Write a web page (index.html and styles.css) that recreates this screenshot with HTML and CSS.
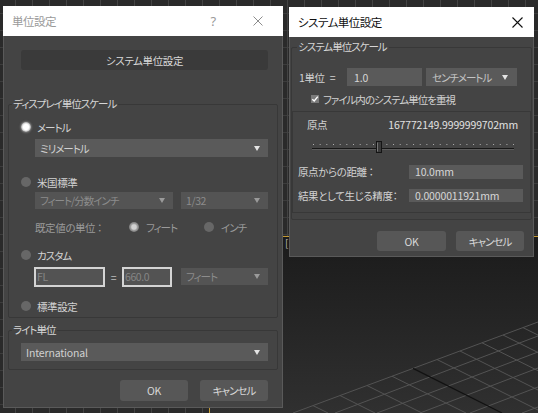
FILE: index.html
```html
<!DOCTYPE html>
<html lang="ja">
<head>
<meta charset="utf-8">
<title>単位設定</title>
<link rel="stylesheet" href="styles.css">
</head>
<body>
<div class="viewport">
  <span class="vp-label">[</span>
  <svg class="vp-grid" width="329" height="177" viewBox="209 236 329 177">
    <g stroke="#535353" stroke-width="1" fill="none">
      <line x1="293" y1="413" x2="538" y2="322"/>
      <line x1="335" y1="413" x2="538" y2="336"/>
      <line x1="377" y1="413" x2="538" y2="352"/>
      <line x1="420" y1="413" x2="538" y2="368"/>
      <line x1="470" y1="413" x2="538" y2="387"/>
      <line x1="522" y1="413" x2="538" y2="407"/>
      <line x1="313" y1="405.6" x2="328" y2="413"/>
      <line x1="340" y1="395.5" x2="375" y2="413"/>
      <line x1="367" y1="385.5" x2="422" y2="413"/>
      <line x1="392" y1="376.2" x2="466" y2="413"/>
      <line x1="437" y1="359.5" x2="544" y2="413"/>
      <line x1="460" y1="351" x2="584" y2="413"/>
      <line x1="482" y1="342.8" x2="623" y2="413"/>
      <line x1="503" y1="335" x2="659" y2="413"/>
      <line x1="523" y1="327.6" x2="694" y2="413"/>
    </g>
    <line x1="413" y1="368.4" x2="502" y2="413" stroke="#121212" stroke-width="1.2"/>
  </svg>
</div>

<div class="dlg dlg-units">
  <div class="titlebar inactive">
    <span class="title">単位設定</span>
    <span class="help">?</span>
    <span class="close">
      <svg width="10" height="10" viewBox="0 0 10 10"><path d="M0.5 0.5 L9.5 9.5 M9.5 0.5 L0.5 9.5" stroke="#8c8c8c" stroke-width="1"/></svg>
    </span>
  </div>
  <div class="dlg-body units-body">
    <button class="sysbtn">システム単位設定</button>

    <fieldset class="grp grp-display">
      <legend class="k">ディスプレイ単位スケール</legend>
      <div class="grp-inner">
        <div class="radio-row r-metric"><span class="radio on"></span><span class="k">メートル</span></div>
        <div class="select s-mm"><span class="k">ミリメートル</span><span class="arrow"></span></div>
        <div class="radio-row r-us"><span class="radio"></span><span>米国標準</span></div>
        <div class="sel-row r-us-sel">
          <div class="select dis s-ftin"><span class="k">フィート/分数インチ</span><span class="arrow"></span></div>
          <div class="select dis s-frac"><span>1/32</span><span class="arrow"></span></div>
        </div>
        <div class="default-row">
          <span class="def-label">既定値の単位 ：</span>
          <span class="opt opt-ft"><span class="radio on-dis"></span><span class="k">フィート</span></span>
          <span class="opt"><span class="radio"></span><span class="k">インチ</span></span>
        </div>
        <div class="radio-row r-custom"><span class="radio"></span><span class="k">カスタム</span></div>
        <div class="custom-row">
          <div class="inbox in-fl">FL</div>
          <span class="eq">=</span>
          <div class="inbox in-val">660.0</div>
          <div class="select dis s-ft"><span class="k">フィート</span><span class="arrow"></span></div>
        </div>
        <div class="radio-row r-std"><span class="radio"></span><span>標準設定</span></div>
      </div>
    </fieldset>

    <fieldset class="grp grp-light">
      <legend class="k">ライト単位</legend>
      <div class="grp-inner">
        <div class="select s-intl"><span class="latin">International</span><span class="arrow"></span></div>
      </div>
    </fieldset>

    <div class="btnrow units-btns">
      <button class="btn">OK</button>
      <button class="btn k">キャンセル</button>
    </div>
  </div>
</div>

<div class="dlg dlg-sys">
  <div class="titlebar active">
    <span class="title">システム単位設定</span>
    <span class="close">
      <svg width="11" height="11" viewBox="0 0 11 11"><path d="M0.5 0.5 L10.5 10.5 M10.5 0.5 L0.5 10.5" stroke="#111" stroke-width="1.1"/></svg>
    </span>
  </div>
  <div class="dlg-body sys-body">
    <fieldset class="sgrp">
      <legend class="k">システム単位スケール</legend>
      <div class="unit-row">
        <span class="unit-label">1単位<span class="eq2">=</span></span>
        <div class="field f-one latin">1.0</div>
        <div class="select s-cm"><span class="k">センチメートル</span><span class="arrow"></span></div>
      </div>
      <div class="check-row">
        <svg class="check" width="8" height="8" viewBox="0 0 8 8"><rect width="8" height="8" fill="#7a7a7a"/><path d="M1.3 4.2 L3.2 6 L6.8 1.6" stroke="#fff" stroke-width="1.4" fill="none"/></svg>
        <span class="k">ファイル内のシステム単位を重視</span>
      </div>
      <div class="origin-box">
        <div class="origin-row"><span>原点</span><span class="origin-val latin">167772149.9999999702mm</span></div>
        <svg class="slider" width="202" height="12" viewBox="0 0 202 12">
          <line x1="1" y1="3.5" x2="202" y2="3.5" stroke="#b0b0b0" stroke-width="1" stroke-dasharray="1 5.67"/>
          <line x1="0" y1="7.5" x2="202" y2="7.5" stroke="#161616" stroke-width="1"/>
          <line x1="0" y1="8.5" x2="202" y2="8.5" stroke="#5c5c5c" stroke-width="1"/>
          <rect x="64.5" y="0.5" width="5" height="11" fill="#3a3a3a" stroke="#141414"/>
          <line x1="65.5" y1="1.5" x2="65.5" y2="10.5" stroke="#777" stroke-width="1"/>
        </svg>
        <div class="info-row r-dist"><span class="info-label">原点からの距離 ：</span><div class="field f-info latin">10.0mm</div></div>
        <div class="info-row r-prec"><span class="info-label">結果として生じる精度：</span><div class="field f-info latin">0.0000011921mm</div></div>
      </div>
    </fieldset>
    <div class="btnrow sys-btns">
      <button class="btn b-ok">OK</button>
      <button class="btn k">キャンセル</button>
    </div>
  </div>
</div>
</body>
</html>
```

FILE: styles.css
```css
* { box-sizing: border-box; }

html, body { margin: 0; padding: 0; }

body {
  width: 538px;
  height: 413px;
  overflow: hidden;
  position: relative;
  font-family: "Noto Sans CJK JP", "Noto Sans", sans-serif;
  font-size: 10.5px;
  letter-spacing: -0.4px;
  font-feature-settings: "palt";
  color: #d2d2d2;
  background-color: #2a2a2a;
  background-image:
    linear-gradient(90deg, #434343 1px, transparent 1px),
    linear-gradient(#3c3c3c 1px, transparent 1px);
  background-size: 17px 17px;
  background-position: 15px 13px;
}

.k { letter-spacing: -1px; }
.latin { letter-spacing: -0.15px; }

/* 3D viewport behind the dialogs */
.viewport {
  position: absolute;
  left: 209px;
  top: 236px;
  right: 0;
  bottom: 0;
  border-top: 1px solid #c49a35;
  border-left: 1px solid #c49a35;
  background: linear-gradient(#1b1b1b, #303030);
  overflow: hidden;
}
.vp-grid { position: absolute; left: -1px; top: -1px; display: block; }
.vp-label {
  position: absolute;
  left: 75px;
  top: 0;
  font-size: 10px;
  line-height: 11px;
  color: #bbb;
}

/* dialog windows */
.dlg {
  position: absolute;
  display: flex;
  flex-direction: column;
  background: #444444;
}
.dlg-units { left: 3px; top: 6px; width: 280px; height: 402px; }
.dlg-sys { left: 289px; top: 7px; width: 245px; height: 250px; }

.titlebar {
  flex: none;
  height: 30px;
  background: #ffffff;
  display: flex;
  align-items: center;
  padding-left: 9px;
  font-size: 11.5px;
  letter-spacing: -0.5px;
}
.titlebar .title { flex: 1; }
.titlebar.inactive { color: #9a9a9a; padding-right: 8px; }
.titlebar.active { color: #111; }
.help {
  width: 30px;
  margin-right: 13px;
  text-align: center;
  font-family: "Noto Sans", sans-serif;
  font-size: 13px;
  color: #9a9a9a;
}
.close {
  width: 34px;
  height: 30px;
  display: flex;
  align-items: center;
  justify-content: center;
}
.close svg { display: block; }

.dlg-body {
  flex: 1;
  border: 1px solid #5a5a5a;
  border-top: none;
}

/* ---------- 単位設定 ---------- */
.units-body { padding: 14px 4px 0 4px; }

button {
  font: inherit;
  font-feature-settings: "palt";
  letter-spacing: inherit;
  border: none;
  margin: 0;
  padding: 0;
  color: #d8d8d8;
}

.sysbtn {
  display: block;
  margin-left: 13px;
  width: 247px;
  height: 20px;
  background: #3a3a3a;
  border-radius: 3px;
}

.grp {
  margin: 0;
  min-width: 0;
  border: 1px solid #383838;
  border-radius: 2px;
  padding: 0 0 4px 3px;
}
.grp legend {
  padding: 0 2px 0 1px;
  line-height: 14px;
  color: #d6d6d6;
}
.grp-display { margin-top: 27px; }
.grp-light { margin-top: 5px; padding-bottom: 8px; }
.grp-inner { padding: 0 9px 0 9px; }

.radio-row {
  display: flex;
  align-items: center;
  gap: 6px;
  height: 14px;
}
.r-metric { margin-top: 9px; }
.r-us { margin-top: 18px; }
.r-custom { margin-top: 14px; }
.r-std { margin-top: 12px; }

.radio {
  flex: none;
  width: 10px;
  height: 10px;
  border-radius: 50%;
  background: #676767;
}
.radio.on {
  background: radial-gradient(circle, #ffffff 0 2.6px, #ececec 3.4px, #a8a8a8 5px);
  box-shadow: 0 0 2px 0.5px rgba(200, 200, 200, 0.55);
}
.radio.on-dis {
  background: radial-gradient(circle, #d2d2d2 0 2.2px, #9a9a9a 3.6px, #7c7c7c 5px);
}

.select {
  display: flex;
  align-items: center;
  justify-content: space-between;
  height: 18px;
  padding: 0 8px 0 5px;
  background: #5a5a5a;
  color: #d0d0d0;
  white-space: nowrap;
}
.select .arrow {
  flex: none;
  width: 0;
  height: 0;
  border-left: 3.5px solid transparent;
  border-right: 3.5px solid transparent;
  border-top: 5px solid #e4e4e4;
}
.select.dis { background: #545454; color: #8c8c8c; }
.select.dis .arrow { border-top-color: #9a9a9a; }

.s-mm { margin: 5px 0 0 14px; }

.sel-row { display: flex; gap: 8px; margin: 3px 0 0 14px; }
.sel-row .select { height: 17px; }
.s-ftin { width: 138px; }
.s-frac { width: 87px; }

.default-row {
  display: flex;
  align-items: center;
  height: 14px;
  margin: 11px 0 0 14px;
  color: #9a9a9a;
}
.def-label { width: 94px; }
.opt { display: flex; align-items: center; gap: 7px; }
.opt-ft { width: 75px; }

.custom-row {
  display: flex;
  align-items: flex-start;
  margin: 5px 0 0 13px;
  height: 20px;
}
.inbox {
  height: 20px;
  background: #535353;
  border: 2px solid #d4d4d4;
  color: #858585;
  padding-left: 1px;
  line-height: 15px;
}
.in-fl { width: 71px; }
.in-val { width: 50px; }
.eq {
  width: 17px;
  text-align: center;
  line-height: 21px;
  color: #bdbdbd;
}
.s-ft { width: 87px; height: 17px; margin: 1px 0 0 9px; }

.s-intl { margin-top: 6px; }

.btnrow { display: flex; justify-content: flex-end; }
.units-btns { gap: 12px; margin: 10px 10px 0 0; }
.btn {
  width: 68px;
  height: 21px;
  background: #575757;
  border-radius: 3px;
}
.btn.k { letter-spacing: -1px; }

/* ---------- システム単位設定 ---------- */
.sys-body { padding: 3px 1px 0 1px; }

.sgrp {
  margin: 0;
  min-width: 0;
  border: 1px solid #383838;
  border-radius: 2px;
  padding: 0 0 6px 0;
}
.sgrp legend {
  margin-left: 5px;
  padding: 0 2px 0 1px;
  line-height: 14px;
  color: #d6d6d6;
}

.unit-row {
  display: flex;
  align-items: center;
  height: 18px;
  margin-top: 14px;
  padding-left: 7px;
}
.unit-label { width: 48px; }
.eq2 { margin-left: 5px; }
.field {
  background: #5a5a5a;
  color: #d6d6d6;
  padding-left: 6px;
  display: flex;
  align-items: center;
}
.f-one { width: 75px; height: 18px; padding-left: 7px; }
.s-cm { width: 91px; margin-left: 4px; color: #c4c4c4; padding-left: 6px; padding-right: 9px; }

.check-row {
  display: flex;
  align-items: center;
  gap: 4px;
  height: 14px;
  margin: 6px 0 0 19px;
}
.check { display: block; flex: none; }

.origin-box {
  margin-top: 5px;
  border: 1px solid #383838;
  padding: 0 0 9px 0;
}
.origin-row {
  display: flex;
  justify-content: space-between;
  align-items: center;
  height: 14px;
  margin-top: 5px;
  padding: 0 12px 0 14px;
}
.origin-val { color: #e0e0e0; }
.slider { display: block; margin: 10px 0 0 19px; }

.info-row {
  display: flex;
  align-items: center;
  padding-left: 5px;
}
.info-label { width: 111px; }
.f-info { width: 114px; height: 14px; }
.r-dist { margin-top: 11px; }
.r-prec { margin-top: 9px; }
.r-prec .f-info { height: 13px; }

.sys-btns { gap: 10px; margin: 11px 8px 0 0; }
.sys-btns .btn { height: 20px; }
.b-ok { width: 69px; }
```
